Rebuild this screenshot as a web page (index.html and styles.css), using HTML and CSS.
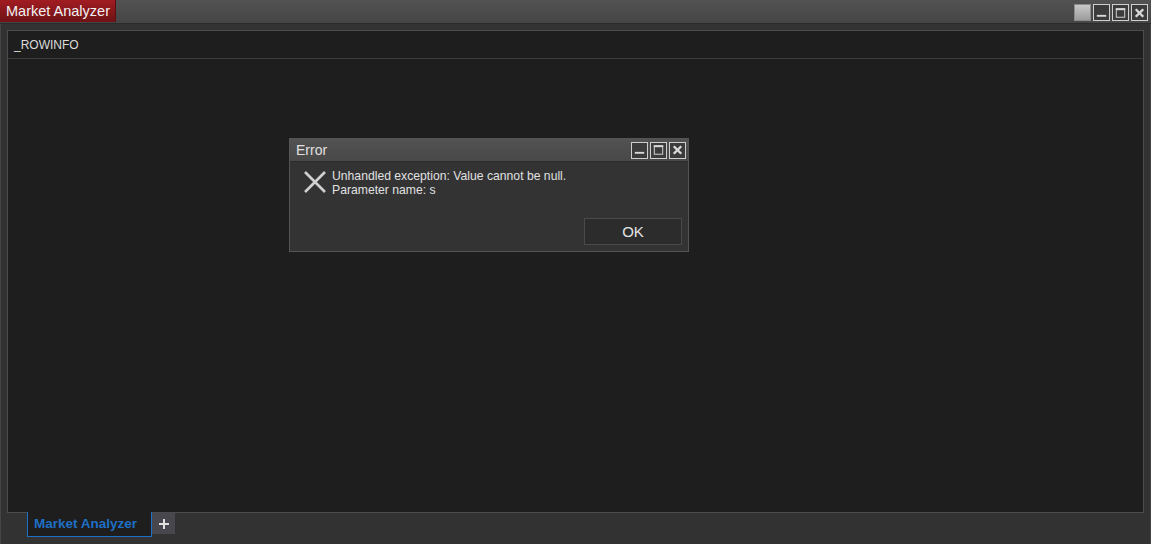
FILE: index.html
```html
<!DOCTYPE html>
<html lang="en">
<head>
    <meta charset="UTF-8">
    <title>Market Analyzer</title>
    <link rel="stylesheet" href="styles.css">
</head>
<body>

    <div class="window">
        <div class="titlebar">
            <div class="title-tab">Market Analyzer</div>
            <div class="win-buttons">
                <span class="win-btn solid"></span>
                <span class="win-btn">
                    <svg width="16" height="16" viewBox="0 0 16 16"><rect x="3" y="10" width="10" height="2" fill="#d8d8d8"/></svg>
                </span>
                <span class="win-btn">
                    <svg width="16" height="16" viewBox="0 0 16 16"><rect x="3.5" y="3.5" width="9" height="9" fill="none" stroke="#d8d8d8"/><rect x="3" y="3" width="10" height="2" fill="#d8d8d8"/></svg>
                </span>
                <span class="win-btn">
                    <svg width="16" height="16" viewBox="0 0 16 16"><path d="M4 4 L12 12 M12 4 L4 12" stroke="#d8d8d8" stroke-width="2.6"/></svg>
                </span>
            </div>
        </div>

        <div class="content">
            <div class="grid">
                <div class="grid-header">_ROWINFO</div>
            </div>
        </div>

        <div class="tabs">
            <div class="tab active">Market Analyzer</div>
            <div class="tab-add">
                <svg width="12" height="12" viewBox="0 0 12 12"><path d="M6 1 V11 M1 6 H11" stroke="#e0e0e0" stroke-width="2"/></svg>
            </div>
        </div>

        <div class="dialog">
            <div class="dialog-title">
                <span>Error</span>
                <div class="dialog-buttons">
                    <span class="win-btn">
                        <svg width="16" height="16" viewBox="0 0 16 16"><rect x="3" y="10" width="10" height="2" fill="#d8d8d8"/></svg>
                    </span>
                    <span class="win-btn">
                        <svg width="16" height="16" viewBox="0 0 16 16"><rect x="3.5" y="3.5" width="9" height="9" fill="none" stroke="#d8d8d8"/><rect x="3" y="3" width="10" height="2" fill="#d8d8d8"/></svg>
                    </span>
                    <span class="win-btn">
                        <svg width="16" height="16" viewBox="0 0 16 16"><path d="M4 4 L12 12 M12 4 L4 12" stroke="#d8d8d8" stroke-width="2.6"/></svg>
                    </span>
                </div>
            </div>
            <div class="dialog-body">
                <svg class="error-icon" width="24" height="24" viewBox="0 0 24 24"><path d="M2 2 L22 22 M22 2 L2 22" stroke="#d0d0d0" stroke-width="2.6"/></svg>
                <div class="message">
                    Unhandled exception: Value cannot be null.<br>
                    Parameter name: s
                </div>
            </div>
            <div class="dialog-footer">
                <button class="ok-btn">OK</button>
            </div>
        </div>
    </div>

</body>
</html>
```

FILE: styles.css
```css
body {
    margin: 0;
    padding: 0;
    background-color: #333;
    font-family: "Liberation Sans", Arial, sans-serif;
}

.window {
    position: relative;
    box-sizing: border-box;
    width: 1151px;
    height: 544px;
    display: flex;
    flex-direction: column;
    background-color: #323232;
    border-left: 1px solid #454545;
    border-right: 1px solid #454545;
}

.titlebar {
    height: 23px;
    display: flex;
    justify-content: space-between;
    align-items: flex-start;
    background: linear-gradient(#525252, #454545);
    border-bottom: 1px solid #2b2b2b;
    margin: 0 -1px;
}

.title-tab {
    height: 22px;
    padding: 0 5px 0 6px;
    line-height: 22px;
    font-size: 14.5px;
    color: #f2f2f2;
    background: linear-gradient(#a11d22, #6f1215);
    border-right: 1px solid #5a0e10;
}

.win-buttons {
    display: flex;
    gap: 2px;
    padding: 4px 3px 0 0;
}

.win-btn {
    box-sizing: border-box;
    width: 17px;
    height: 17px;
    border: 1px solid #cfcfcf;
    background-color: #3c3c3c;
    display: flex;
    align-items: center;
    justify-content: center;
}

.win-btn svg {
    display: block;
}

.win-btn.solid {
    border-color: #8c8c8c;
    background: linear-gradient(#c8c8c8, #9c9c9c);
}

.content {
    flex: 1;
    display: flex;
    padding: 6px 6px 0 6px;
}

.grid {
    flex: 1;
    background-color: #1e1e1e;
    border: 1px solid #4c4c4c;
}

.grid-header {
    height: 27px;
    line-height: 28px;
    padding-left: 6px;
    font-size: 12px;
    color: #dcdcdc;
    border-bottom: 1px solid #3c3c3c;
}

.tabs {
    height: 32px;
    display: flex;
    align-items: flex-start;
    padding-left: 26px;
    margin-top: -1px;
}

.tab {
    height: 24px;
    line-height: 23px;
    padding: 0 14px 0 6px;
    font-size: 13.5px;
    font-weight: bold;
    color: #1f6fc4;
    background-color: #1e1e1e;
    border: 1px solid #1f6fc4;
    border-top: none;
}

.tab-add {
    width: 23px;
    height: 21px;
    margin-top: 1px;
    background-color: #47474d;
    display: flex;
    align-items: center;
    justify-content: center;
}

.dialog {
    position: absolute;
    left: 288px;
    top: 138px;
    width: 400px;
    height: 114px;
    box-sizing: border-box;
    background-color: #333334;
    border: 1px solid #555;
    display: flex;
    flex-direction: column;
}

.dialog-title {
    height: 22px;
    display: flex;
    justify-content: space-between;
    align-items: center;
    padding: 0 2px 0 6px;
    background: linear-gradient(#525252, #484848);
    border-bottom: 1px solid #2c2c2c;
    font-size: 14px;
    color: #e0e0e0;
}

.dialog-buttons {
    display: flex;
    gap: 2px;
}

.dialog-body {
    display: flex;
    align-items: flex-start;
    padding: 8px 0 0 13px;
    height: 48px;
}

.error-icon {
    margin-right: 5px;
}

.message {
    font-size: 12.2px;
    line-height: 14px;
    color: #e0e0e0;
    margin-top: -1px;
}

.dialog-footer {
    display: flex;
    justify-content: flex-end;
    padding-right: 6px;
}

.ok-btn {
    width: 98px;
    height: 27px;
    background-color: #2c2c2d;
    border: 1px solid #4a4a4a;
    color: #e4e4e4;
    font-family: "Liberation Sans", Arial, sans-serif;
    font-size: 15px;
    padding: 0;
}
```
